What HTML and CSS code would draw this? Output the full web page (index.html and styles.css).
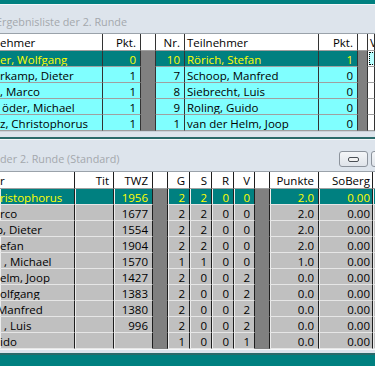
FILE: index.html
```html
<!DOCTYPE html>
<html>
<head>
<title>Runde 2</title>
<meta http-equiv="content-type" content="text/html; charset=UTF-8">
<link rel="stylesheet" href="styles.css">
</head>
<body>

<div class="win win1">
	<div class="caption"><span class="captext cut2">Ergebnisliste der 2. Runde</span></div>
	<div class="grid">
		<div class="row hdr">
			<div class="c l">ehmer</div><div class="c">Pkt.</div><div class="c gap"></div><div class="c">Nr.</div>
			<div class="c l pl">Teilnehmer</div><div class="c">Pkt.</div><div class="c gap"></div><div class="c l pl">V</div>
		</div>
		<div class="row sel">
			<div class="c l">er, Wolfgang</div><div class="c">0</div><div class="c gap"></div><div class="c">10</div>
			<div class="c l pl">Rörich, Stefan</div><div class="c">1</div><div class="c gap"></div><div class="c free"><div class="focus"></div></div>
		</div>
		<div class="row">
			<div class="c l">rkamp, Dieter</div><div class="c">1</div><div class="c gap"></div><div class="c">7</div>
			<div class="c l pl">Schoop, Manfred</div><div class="c">0</div><div class="c gap"></div><div class="c free"></div>
		</div>
		<div class="row">
			<div class="c l">, Marco</div><div class="c">1</div><div class="c gap"></div><div class="c">8</div>
			<div class="c l pl">Siebrecht, Luis</div><div class="c">0</div><div class="c gap"></div><div class="c free"></div>
		</div>
		<div class="row">
			<div class="c l pl">öder, Michael</div><div class="c">1</div><div class="c gap"></div><div class="c">9</div>
			<div class="c l pl">Roling, Guido</div><div class="c">0</div><div class="c gap"></div><div class="c free"></div>
		</div>
		<div class="row">
			<div class="c l">z, Christophorus</div><div class="c">1</div><div class="c gap"></div><div class="c">1</div>
			<div class="c l pl">van der Helm, Joop</div><div class="c">0</div><div class="c gap"></div><div class="c free"></div>
		</div>
	</div>
	<div class="foot"></div>
</div>

<div class="win win2">
	<div class="caption">
		<span class="captext">der 2. Runde (Standard)</span>
		<span class="capbtn"><i class="minico"></i></span>
		<span class="capbtn"></span>
	</div>
	<div class="grid">
		<div class="row hdr">
			<div class="c l">r</div><div class="c">Tit</div><div class="c">TWZ</div><div class="c gap"></div>
			<div class="c">G</div><div class="c">S</div><div class="c">R</div><div class="c">V</div><div class="c gap"></div>
			<div class="c">Punkte</div><div class="c sob">SoBerg</div><div class="c"></div>
		</div>
		<div class="row sel">
			<div class="c l">ristophorus</div><div class="c"></div><div class="c">1956</div><div class="c gap"></div>
			<div class="c">2</div><div class="c">2</div><div class="c">0</div><div class="c">0</div><div class="c gap"></div>
			<div class="c">2.0</div><div class="c sob">0.00</div><div class="c"></div>
		</div>
		<div class="row">
			<div class="c l">rco</div><div class="c"></div><div class="c">1677</div><div class="c gap"></div>
			<div class="c">2</div><div class="c">2</div><div class="c">0</div><div class="c">0</div><div class="c gap"></div>
			<div class="c">2.0</div><div class="c sob">0.00</div><div class="c"></div>
		</div>
		<div class="row">
			<div class="c l cut2">p, Dieter</div><div class="c"></div><div class="c">1554</div><div class="c gap"></div>
			<div class="c">2</div><div class="c">2</div><div class="c">0</div><div class="c">0</div><div class="c gap"></div>
			<div class="c">2.0</div><div class="c sob">0.00</div><div class="c"></div>
		</div>
		<div class="row">
			<div class="c l">efan</div><div class="c"></div><div class="c">1904</div><div class="c gap"></div>
			<div class="c">2</div><div class="c">2</div><div class="c">0</div><div class="c">0</div><div class="c gap"></div>
			<div class="c">2.0</div><div class="c sob">0.00</div><div class="c"></div>
		</div>
		<div class="row">
			<div class="c l pl4">, Michael</div><div class="c"></div><div class="c">1570</div><div class="c gap"></div>
			<div class="c">1</div><div class="c">1</div><div class="c">0</div><div class="c">0</div><div class="c gap"></div>
			<div class="c">1.0</div><div class="c sob">0.00</div><div class="c"></div>
		</div>
		<div class="row">
			<div class="c l">elm, Joop</div><div class="c"></div><div class="c">1427</div><div class="c gap"></div>
			<div class="c">2</div><div class="c">0</div><div class="c">0</div><div class="c">2</div><div class="c gap"></div>
			<div class="c">0.0</div><div class="c sob">0.00</div><div class="c"></div>
		</div>
		<div class="row">
			<div class="c l">olfgang</div><div class="c"></div><div class="c">1383</div><div class="c gap"></div>
			<div class="c">2</div><div class="c">0</div><div class="c">0</div><div class="c">2</div><div class="c gap"></div>
			<div class="c">0.0</div><div class="c sob">0.00</div><div class="c"></div>
		</div>
		<div class="row">
			<div class="c l cut3">Manfred</div><div class="c"></div><div class="c">1380</div><div class="c gap"></div>
			<div class="c">2</div><div class="c">0</div><div class="c">0</div><div class="c">2</div><div class="c gap"></div>
			<div class="c">0.0</div><div class="c sob">0.00</div><div class="c"></div>
		</div>
		<div class="row">
			<div class="c l pl4">, Luis</div><div class="c"></div><div class="c">996</div><div class="c gap"></div>
			<div class="c">2</div><div class="c">0</div><div class="c">0</div><div class="c">2</div><div class="c gap"></div>
			<div class="c">0.0</div><div class="c sob">0.00</div><div class="c"></div>
		</div>
		<div class="row">
			<div class="c l">ido</div><div class="c"></div><div class="c"></div><div class="c gap"></div>
			<div class="c">1</div><div class="c">0</div><div class="c">0</div><div class="c">1</div><div class="c gap"></div>
			<div class="c">0.0</div><div class="c sob">0.00</div><div class="c"></div>
		</div>
	</div>
	<div class="foot"></div>
</div>

</body>
</html>
```

FILE: styles.css
```css
*				{ box-sizing:border-box }
body			{ margin:0;padding:4px 0 0;height:366px;overflow:hidden;background:#008080;color:#000;font-family:"Segoe UI","Open Sans",sans-serif;font-size:11.5px }

.win			{ width:375px;overflow:hidden;background:#dde4ec;border-bottom:2px solid #2a6a6a }
.caption		{ display:flex;align-items:flex-start;border-top:1px solid #f3f6f9;white-space:nowrap }
.win1 .caption	{ height:29px;padding-top:9px }
.win2 .caption	{ height:32px;padding-top:11px }
.captext		{ flex:none;width:339px;font-size:10.8px;line-height:16px;color:#a4a8ac }
.capbtn			{ flex:none;width:29px;height:16px;margin-right:3px;border:1px solid #8c939c;border-radius:3px;background:linear-gradient(#f4f6f8,#dfe4ea);display:flex;align-items:center;justify-content:center }
.minico			{ display:block;width:11px;height:5px;margin-top:1px;border:1px solid #4a4f55;border-radius:2px;background:#f2f2f2 }

.grid			{ border-top:1px solid #9aa2aa }
.row			{ display:grid;white-space:nowrap }
.win1 .row		{ grid-template-columns:103px 38px 15px 29px 134px 39px 10px 1fr }
.win2 .row		{ grid-template-columns:75px 39px 39px 15px 22px 22px 22px 21px 15px 49px 54px 1fr }

.c				{ height:16px;overflow:hidden;padding:2px 4px 0 0;line-height:13px;text-align:right;border-right:1px solid #333;border-bottom:1px solid #a0a0a0 }
.c.l			{ text-align:left;padding-left:0 }
.c.pl			{ padding-left:2px }
.c.pl4			{ padding-left:4px }
.c.sob			{ padding-right:2px }
.cut2			{ text-indent:-2px;margin-left:-2px }
.cut3			{ text-indent:-3px }

.hdr .c			{ height:17px;line-height:14px;background:#fff;border-bottom-color:#a0a0a0 }
.win1 .c		{ background:#80ffff }
.win1 .hdr .c	{ background:#fff }
.win1 .c.free	{ background:#fff;padding:1px 0 0 1px }
.win2 .c		{ background:#c0c0c0;border-right-color:#1e1e1e;border-bottom-color:#e6e6e6;box-shadow:inset 1px 0 0 #ececec }
.win2 .hdr .c	{ background:#fff;box-shadow:none;border-bottom-color:#a0a0a0 }

.row .c.gap		{ background:#808080;border-bottom-color:#808080;box-shadow:none }
.hdr .c.gap		{ background:#fff;border-bottom-color:#a0a0a0 }
.sel .c			{ background:#008080;color:#ffff00 }
.win1 .sel .c.free	{ background:#fff }

.focus			{ width:10px;height:13px;border:1px dotted #000;background:#b8ffff }

.win1 .foot		{ height:6px;border-top:1px solid #c8d0d8 }
.win2 .foot		{ height:4px;border-top:1px solid #f4f6f8 }
```
